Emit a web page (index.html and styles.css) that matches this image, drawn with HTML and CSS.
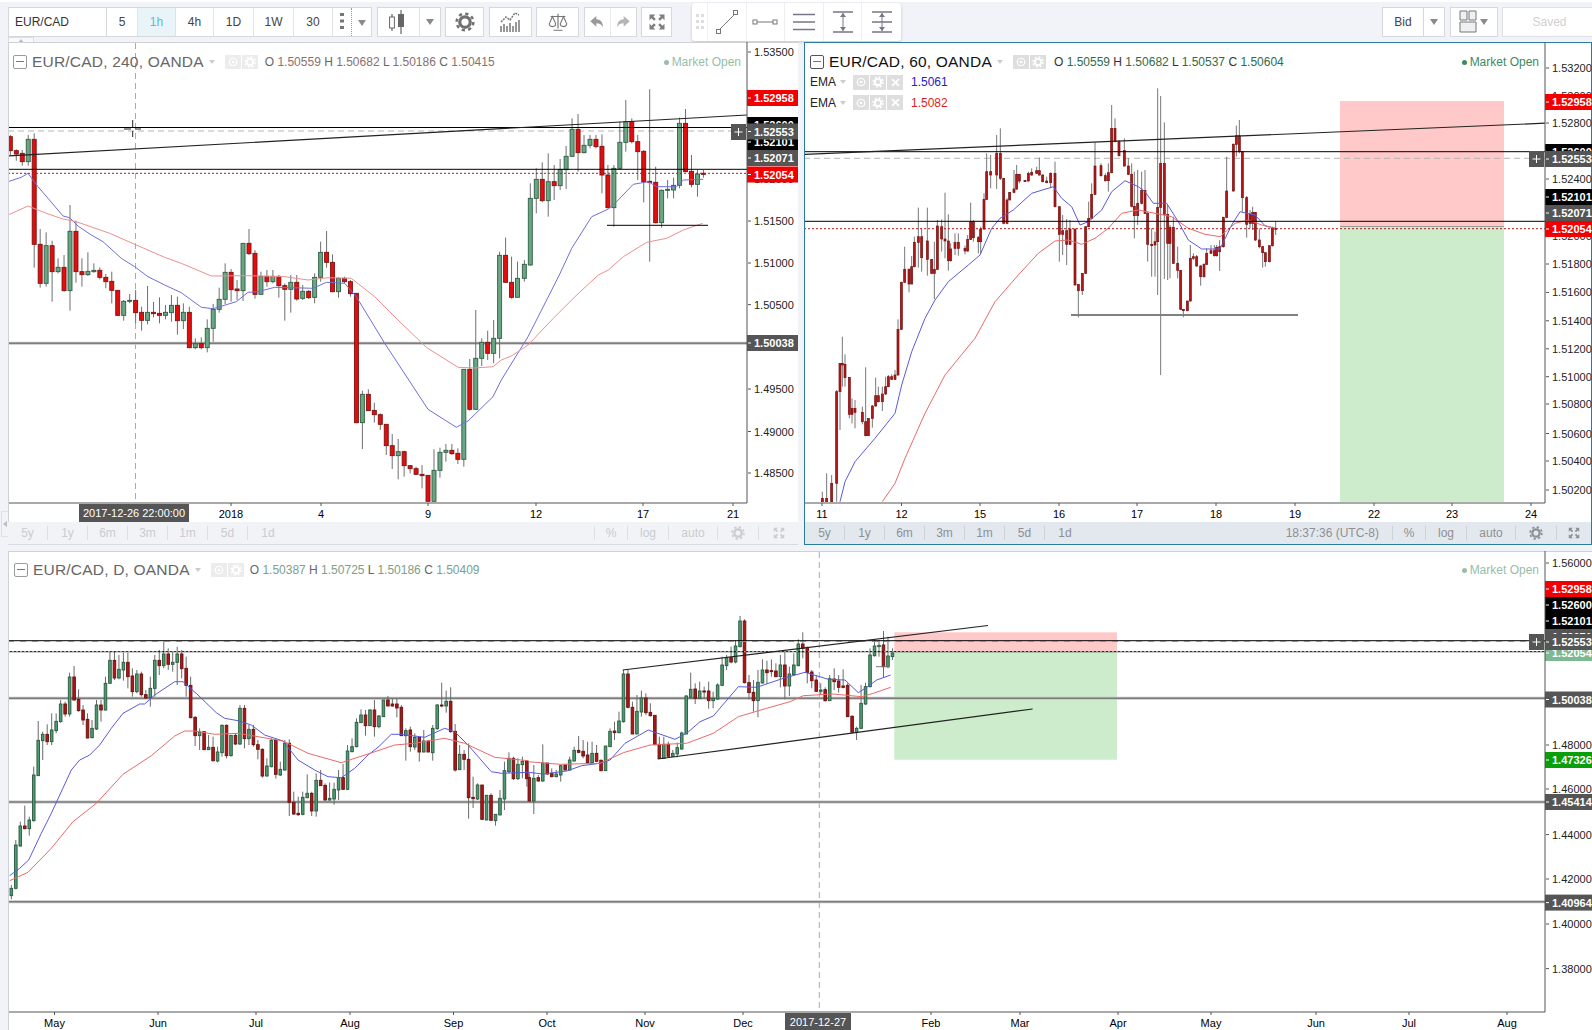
FILE: index.html
```html
<!DOCTYPE html>
<html lang="en">
<head>
    <meta charset="UTF-8">
    <title>EUR/CAD multi chart</title>
    <link rel="stylesheet" href="styles.css">
</head>
<body>
    <!-- Icon sprite -->
    <svg class="sprite" aria-hidden="true">
        <symbol id="i-gear" viewBox="0 0 16 16">
            <circle cx="8" cy="8" r="4.2" fill="none" stroke="currentColor" stroke-width="2.6"/>
            <circle cx="8" cy="8" r="6.7" fill="none" stroke="currentColor" stroke-width="2" stroke-dasharray="2.6 2.66"/>
        </symbol>
        <symbol id="i-eye" viewBox="0 0 16 16">
            <circle cx="8" cy="8" r="5" fill="none" stroke="currentColor" stroke-width="1.6"/>
            <circle cx="8" cy="8" r="1.8" fill="currentColor"/>
        </symbol>
        <symbol id="i-close" viewBox="0 0 16 16">
            <path d="M3 3l10 10M13 3L3 13" stroke="currentColor" stroke-width="2.4"/>
        </symbol>
        <symbol id="i-full" viewBox="0 0 24 24">
            <g fill="currentColor">
                <path d="M3 3h7l-2.400 2.400 3 3-2.200 2.200-3-3L3 10z"/>
                <path d="M21 3v7l-2.400-2.400-3 3-2.200-2.200 3-3L14 3z"/>
                <path d="M21 21h-7l2.400-2.400-3-3 2.200-2.200 3 3L21 14z"/>
                <path d="M3 21v-7l2.400 2.400 3-3 2.200 2.200-3 3L10 21z"/>
            </g>
        </symbol>
    </svg>

    <div class="toolbar">
        <div class="tool-group">
            <div class="symbol-box">EUR/CAD</div>
            <button class="tf tf-sm">5</button>
            <button class="tf tf-active">1h</button>
            <button class="tf">4h</button>
            <button class="tf tf-lg">1D</button>
            <button class="tf tf-lg">1W</button>
            <button class="tf tf-md">30</button>
            <button class="tf tf-dots">
                <svg width="4" height="16" viewBox="0 0 4 16"><path d="M0 0h4v3H0zM0 6.500h4v3H0zM0 13h4v3H0z" fill="#777"/></svg>
            </button>
            <button class="tf tf-caret"><span class="caret"></span></button>
        </div>
        <div class="tool-group">
            <button class="tool tool-candle">
                <svg width="24" height="26" viewBox="0 0 24 26"><path d="M6 5v17M15 1v24" stroke="#666" stroke-width="1.200"/><rect x="3.600" y="8" width="4.800" height="11" fill="#fff" stroke="#666"/><rect x="12" y="5" width="6" height="13" fill="#666"/></svg>
            </button>
            <button class="tool tool-drop"><span class="caret"></span></button>
        </div>
        <div class="tool-group">
            <button class="tool tool-gear"><svg class="ic-gear" width="20" height="20"><use href="#i-gear"/></svg></button>
        </div>
        <div class="tool-group">
            <button class="tool">
                <svg width="24" height="24" viewBox="0 0 24 24"><path d="M3 22v-6M6 22v-8M9 22v-6M12 22v-9M15 22v-6M18 22v-10M21 22v-12" stroke="#777" stroke-width="1.500"/><path d="M3 12l5-5 4 3 5-7 4 2" fill="none" stroke="#777" stroke-width="1.500" stroke-dasharray="2 1"/></svg>
            </button>
        </div>
        <div class="tool-group">
            <button class="tool">
                <svg width="22" height="22" viewBox="0 0 24 24"><path d="M12 3v16M7 21h10M4 6h16" stroke="#777" stroke-width="1.300"/><path d="M6 6l-3.500 8a3.500 3 0 0 0 7 0zM18 6l-3.500 8a3.500 3 0 0 0 7 0z" fill="none" stroke="#777" stroke-width="1.200"/></svg>
            </button>
        </div>
        <div class="tool-group">
            <button class="tool tool-undo">
                <svg width="16" height="16" viewBox="0 0 24 24"><path d="M11 3L2 11l9 8v-5c5 0 8 2 10 6 0-8-4-12-10-12z" fill="#999"/></svg>
            </button>
            <button class="tool tool-redo">
                <svg width="16" height="16" viewBox="0 0 24 24"><path d="M13 3l9 8-9 8v-5c-5 0-8 2-10 6 0-8 4-12 10-12z" fill="#b5b5b5"/></svg>
            </button>
        </div>
        <div class="tool-group">
            <button class="tool tool-full"><svg class="ic-full" width="20" height="20"><use href="#i-full"/></svg></button>
        </div>

        <!-- Floating drawing tools -->
        <div class="draw-bar">
            <div class="draw-grip">
                <svg width="8" height="16" viewBox="0 0 8 16"><path d="M0 0h3v3H0zM5 0h3v3H5zM0 6h3v3H0zM5 6h3v3H5zM0 12h3v3H0zM5 12h3v3H5z" fill="#ddd"/></svg>
            </div>
            <div class="draw-cell">
                <svg width="24" height="26" viewBox="0 0 24 26"><path d="M4 21L20 5" stroke="#777"/><rect x="1.500" y="20.500" width="4" height="4" fill="#fff" stroke="#777"/><rect x="18.500" y="1.500" width="4" height="4" fill="#fff" stroke="#777"/></svg>
            </div>
            <div class="draw-cell">
                <svg width="26" height="10" viewBox="0 0 26 10"><path d="M5 5h16" stroke="#777"/><rect x="1" y="3" width="4" height="4" fill="#fff" stroke="#777"/><rect x="21" y="3" width="4" height="4" fill="#fff" stroke="#777"/></svg>
            </div>
            <div class="draw-cell">
                <svg width="24" height="20" viewBox="0 0 24 20"><path d="M1 2.500h22M1 10h22M1 17.500h22" stroke="#778" stroke-width="1.300"/></svg>
            </div>
            <div class="draw-cell">
                <svg width="24" height="26" viewBox="0 0 24 26"><path d="M2 3h20M2 23h20" stroke="#778" stroke-width="1.300"/><path d="M12 4v18" stroke="#778"/><path d="M12 4l-3 4h6zM12 22l-3-4h6z" fill="#778"/></svg>
            </div>
            <div class="draw-cell">
                <svg width="24" height="26" viewBox="0 0 24 26"><path d="M2 3h20M2 23h20M2 13h20" stroke="#778" stroke-width="1.300"/><path d="M12 4v18" stroke="#778"/><path d="M12 4l-3 4h6zM12 22l-3-4h6z" fill="#778"/></svg>
            </div>
        </div>

        <div class="tool-right">
            <div class="tool-group">
                <button class="tool tool-bid">Bid</button>
                <button class="tool tool-bid-drop"><span class="caret"></span></button>
            </div>
            <div class="tool-group">
                <button class="tool tool-layout">
                    <svg width="18" height="24" viewBox="0 0 18 24"><path d="M1 1h7v9H1zM10 1h7v9h-7zM1 12h16v10H1z" fill="#eef0f4" stroke="#777"/></svg>
                    <span class="caret"></span>
                </button>
            </div>
            <button class="tool tool-saved">Saved</button>
        </div>
    </div>

    <div class="symbol-tab"><span class="caret caret-up"></span></div>
    <div class="side-handle"><span class="caret caret-left"></span></div>

    <div class="panes">
        <!-- Chart 1: 240 -->
        <section class="pane pane-idle">
            <svg class="plot" id="plot1"></svg>
            <div class="pane-head head-wide">
                <span class="minbox"></span>
                <span class="title">EUR/CAD, 240, OANDA</span>
                <span class="caret caret-small"></span>
                <span class="head-btns">
                    <span class="head-btn"><svg width="12" height="12"><use href="#i-eye"/></svg></span>
                    <span class="head-btn"><svg width="12" height="12"><use href="#i-gear"/></svg></span>
                </span>
                <span class="ohlc">O <b>1.50559</b> H <b>1.50682</b> L <b>1.50186</b> C <b>1.50415</b></span>
                <span class="market"><i></i>Market Open</span>
            </div>
            <div class="range-bar">
                <button class="range-btn">5y</button>
                <button class="range-btn">1y</button>
                <button class="range-btn">6m</button>
                <button class="range-btn">3m</button>
                <button class="range-btn">1m</button>
                <button class="range-btn">5d</button>
                <button class="range-btn range-last">1d</button>
                <div class="range-right">
                    <button class="range-opt opt-pct">%</button>
                    <button class="range-opt opt-log">log</button>
                    <button class="range-opt opt-auto">auto</button>
                    <button class="range-opt opt-gear"><svg width="14" height="14"><use href="#i-gear"/></svg></button>
                    <button class="range-opt opt-full"><svg width="14" height="14"><use href="#i-full"/></svg></button>
                </div>
            </div>
        </section>

        <!-- Chart 2: 60 (focused) -->
        <section class="pane pane-active">
            <svg class="plot" id="plot2"></svg>
            <div class="pane-head">
                <span class="minbox"></span>
                <span class="title">EUR/CAD, 60, OANDA</span>
                <span class="caret caret-small"></span>
                <span class="head-btns">
                    <span class="head-btn"><svg width="12" height="12"><use href="#i-eye"/></svg></span>
                    <span class="head-btn"><svg width="12" height="12"><use href="#i-gear"/></svg></span>
                </span>
                <span class="ohlc">O <b>1.50559</b> H <b>1.50682</b> L <b>1.50537</b> C <b>1.50604</b></span>
                <span class="market"><i></i>Market Open</span>
            </div>
            <div class="study-rows">
                <div class="study">
                    <span class="study-name">EMA</span><span class="caret caret-small"></span>
                    <span class="head-btns">
                        <span class="head-btn"><svg width="12" height="12"><use href="#i-eye"/></svg></span>
                        <span class="head-btn"><svg width="12" height="12"><use href="#i-gear"/></svg></span>
                        <span class="head-btn"><svg width="11" height="11"><use href="#i-close"/></svg></span>
                    </span>
                    <span class="study-val val-blue">1.5061</span>
                </div>
                <div class="study">
                    <span class="study-name">EMA</span><span class="caret caret-small"></span>
                    <span class="head-btns">
                        <span class="head-btn"><svg width="12" height="12"><use href="#i-eye"/></svg></span>
                        <span class="head-btn"><svg width="12" height="12"><use href="#i-gear"/></svg></span>
                        <span class="head-btn"><svg width="11" height="11"><use href="#i-close"/></svg></span>
                    </span>
                    <span class="study-val val-red">1.5082</span>
                </div>
            </div>
            <div class="range-bar">
                <button class="range-btn">5y</button>
                <button class="range-btn">1y</button>
                <button class="range-btn">6m</button>
                <button class="range-btn">3m</button>
                <button class="range-btn">1m</button>
                <button class="range-btn">5d</button>
                <button class="range-btn range-last">1d</button>
                <div class="range-right">
                    <span class="range-time">18:37:36 (UTC-8)</span>
                    <button class="range-opt opt-pct">%</button>
                    <button class="range-opt opt-log">log</button>
                    <button class="range-opt opt-auto">auto</button>
                    <button class="range-opt opt-gear"><svg width="14" height="14"><use href="#i-gear"/></svg></button>
                    <button class="range-opt opt-full"><svg width="14" height="14"><use href="#i-full"/></svg></button>
                </div>
            </div>
        </section>

        <!-- Chart 3: D -->
        <section class="pane pane-idle pane-wide">
            <svg class="plot" id="plot3"></svg>
            <div class="pane-head">
                <span class="minbox"></span>
                <span class="title">EUR/CAD, D, OANDA</span>
                <span class="caret caret-small"></span>
                <span class="head-btns">
                    <span class="head-btn"><svg width="12" height="12"><use href="#i-eye"/></svg></span>
                    <span class="head-btn"><svg width="12" height="12"><use href="#i-gear"/></svg></span>
                </span>
                <span class="ohlc">O <b>1.50387</b> H <b>1.50725</b> L <b>1.50186</b> C <b>1.50409</b></span>
                <span class="market"><i></i>Market Open</span>
            </div>
        </section>
    </div>

    <script src="chart.js"></script>
</body>
</html>
```

FILE: styles.css
```css
* { box-sizing: border-box; }

html, body {
    margin: 0;
    height: 100%;
}

body {
    width: 1592px;
    height: 1030px;
    overflow: hidden;
    position: relative;
    font-family: "Liberation Sans", Arial, sans-serif;
    font-size: 12px;
    color: #333;
    background-color: #f1f3f8;
    border-top: 2px solid #fff;
}

button {
    font: inherit;
    color: inherit;
    background: #fff;
    border: 0;
    padding: 0;
}

.sprite { display: none; }

/* Carets */
.caret {
    display: inline-block;
    width: 0;
    height: 0;
    border-left: 4px solid transparent;
    border-right: 4px solid transparent;
    border-top: 6px solid #8a8a8a;
}
.caret-small {
    border-left-width: 3px;
    border-right-width: 3px;
    border-top: 4px solid #ccc;
}
.caret-up {
    border-top: 0;
    border-bottom: 4px solid #bbb;
    border-left-width: 3px;
    border-right-width: 3px;
}
.caret-left {
    border: 0;
    border-top: 3px solid transparent;
    border-bottom: 3px solid transparent;
    border-right: 4px solid #bbb;
}

/* Top toolbar */
.toolbar {
    display: flex;
    align-items: flex-start;
    height: 40px;
    padding: 5px 0 0 8px;
    position: relative;
}
.tool-group {
    display: flex;
    height: 30px;
    margin-right: 4.500px;
    background: #fff;
    border: 1px solid #d6d8dc;
    flex: none;
}
.symbol-box {
    width: 98px;
    line-height: 28px;
    padding-left: 6px;
    color: #333;
    border-right: 1px solid #d6d8dc;
}
.tf {
    width: 38px;
    border-right: 1px solid #e2e3e6;
    color: #444;
}
.tf-sm { width: 31px; }
.tf-lg { width: 40px; }
.tf-md { width: 39px; }
.tf-active {
    background-color: #e9f4f9;
    color: #5cb8dc;
}
.tf-dots {
    width: 19px;
    border-right: 1px dotted #999;
}
.tf-caret {
    width: 19px;
    border: 0;
}
.tool {
    width: 41px;
    display: flex;
    align-items: center;
    justify-content: center;
}
.tool-candle {
    width: 42px;
    border-right: 1px solid #e2e3e6;
}
.tool-drop { width: 20px; }
.tool-gear { width: 37px; }
.ic-gear { color: #707070; }
.ic-full { color: #808080; }
.tool-undo {
    width: 26px;
    border-right: 1px solid #e8e9ec;
}
.tool-redo { width: 25px; }
.tool-full { width: 29px; }

.draw-bar {
    display: flex;
    height: 38px;
    margin: -4px 0 0 15.500px;
    background: #fff;
    border-radius: 3px;
    box-shadow: 0 1px 3px rgba(0, 0, 0, 0.2);
    flex: none;
}
.draw-grip {
    width: 16px;
    display: flex;
    align-items: center;
    justify-content: center;
    border-right: 1px solid #eee;
}
.draw-cell {
    width: 38.600px;
    display: flex;
    align-items: center;
    justify-content: center;
    border-right: 1px solid #eee;
}
.draw-cell:last-child { border-right: 0; }

.tool-right {
    display: flex;
    margin-left: auto;
}
.tool-bid {
    width: 41px;
    color: #444;
    border-right: 1px solid #d6d8dc;
}
.tool-bid-drop { width: 20px; }
.tool-layout {
    width: 46px;
    gap: 3px;
}
.tool-saved {
    width: 90px;
    height: 30px;
    color: #d0d0d0;
    border: 1px solid #dfe1e5;
    border-right: 0;
    padding-left: 4px;
}

/* Small tabs around the charts */
.symbol-tab {
    position: absolute;
    left: 8px;
    top: 35px;
    width: 26px;
    height: 6px;
    background: #f8f9fb;
    border: 1px solid #ddd;
    border-bottom: 0;
    display: flex;
    align-items: center;
    justify-content: center;
}
.side-handle {
    position: absolute;
    left: 1px;
    top: 509px;
    width: 7px;
    height: 26px;
    border: 1px solid #e0e0e0;
    border-right: 0;
    display: flex;
    align-items: center;
    justify-content: center;
}

/* Chart panes */
.panes {
    display: grid;
    grid-template-columns: 790px 788px;
    grid-template-rows: 503px 479px;
    gap: 6px;
    padding-left: 8px;
}
.pane {
    position: relative;
    background: #fff;
    overflow: hidden;
}
.pane-idle { box-shadow: inset 1px 1px 0 #cfd1d4; }
.pane-active { box-shadow: inset 0 0 0 1px #2a7c9c; }
.pane-wide { grid-column: 1 / 3; }
.plot {
    display: block;
    position: absolute;
    left: 0;
    top: 0;
}

/* Legend over the chart */
.pane-head {
    position: absolute;
    left: 0;
    right: 47px;
    top: 11px;
    padding: 0 6px 0 6px;
    height: 18px;
    display: flex;
    align-items: center;
}
.head-wide { right: 51px; padding-left: 5px; }
.pane-wide .pane-head { top: 10px; }
.minbox {
    width: 14px;
    height: 14px;
    margin-right: 5px;
    border: 1px solid #9a9a9a;
    border-radius: 2px;
    position: relative;
    flex: none;
}
.pane-active .minbox { border-color: #555; }
.minbox::after {
    content: "";
    position: absolute;
    left: 2px;
    right: 2px;
    top: 5px;
    height: 1px;
    background: #777;
}
.title {
    font-size: 15.500px;
    letter-spacing: 0.200px;
    color: #666;
    white-space: nowrap;
}
.pane-active .title { color: #111; }
.pane-head > .caret-small { margin: 0 10px 0 5px; }
.head-btns {
    display: flex;
    gap: 1px;
}
.head-btn {
    width: 16px;
    height: 14px;
    display: flex;
    align-items: center;
    justify-content: center;
    background: #ececec;
    color: #fff;
}
.pane-active .head-btn { background: #dedede; }
.ohlc {
    margin-left: 8px;
    color: #666;
    white-space: nowrap;
}
.ohlc b { font-weight: normal; }
.head-wide .ohlc { margin-left: 7px; }
.head-wide .ohlc b { color: #8c6f6f; }
.pane-wide .ohlc { margin-left: 6px; }
.pane-wide .ohlc b { color: #7da08c; }
.pane-active .ohlc { color: #333; }
.pane-active .ohlc b { color: #2f6b4a; }
.market {
    margin-left: auto;
    color: #96bea8;
    white-space: nowrap;
}
.market i {
    display: inline-block;
    width: 5px;
    height: 5px;
    margin: 0 3px 1px 0;
    border-radius: 50%;
    background: currentColor;
}
.pane-active .market { color: #3c8a5f; }

/* Studies under the legend */
.study-rows {
    position: absolute;
    left: 6px;
    top: 30px;
}
.study {
    display: flex;
    align-items: center;
    height: 20.500px;
}
.study-name { color: #222; margin-right: 4px; }
.study .head-btns {
    margin-left: 7px;
}
.study .head-btn {
    width: 16px;
    height: 15px;
}
.study-val { margin-left: 8px; }
.val-blue { color: #2424c4; }
.val-red { color: #d81f1f; }

/* Range bar under the chart */
.range-bar {
    position: absolute;
    left: 0;
    right: 0;
    bottom: 0;
    height: 23px;
    display: flex;
    align-items: center;
    color: #c9ccd1;
    background: #f1f3f7;
    border-bottom: 1px solid #d8dadd;
}
.pane-active .range-bar {
    left: 1px;
    right: 1px;
    bottom: 1px;
    height: 22px;
    color: #8d9095;
    background: #e3e8ee;
    border-bottom: 0;
}
.range-bar button {
    background: none;
    height: 14px;
    line-height: 14px;
    text-align: center;
}
.range-btn {
    width: 40px;
    border-right: 1px solid #dcdfe3;
}
.pane-active .range-btn,
.pane-active .range-opt { border-color: #cdd2d8; }
.range-last { border-right: 0; }
.range-right {
    display: flex;
    align-items: center;
    margin-left: auto;
}
.range-time { margin-right: 13px; }
.range-opt {
    border-left: 1px solid #dcdfe3;
    display: flex;
    align-items: center;
    justify-content: center;
}
.opt-pct { width: 33px; }
.opt-log { width: 41px; }
.opt-auto { width: 49px; }
.opt-gear { width: 41px; }
.opt-full { width: 40px; }
.pane-active .opt-full { width: 35px; }

/* Chart text */
.axis-text {
    font: 11px "Liberation Sans", Arial, sans-serif;
    fill: #222;
}
.tag-text {
    font: bold 11px "Liberation Sans", Arial, sans-serif;
    fill: #fff;
}
.time-text {
    font: 11px "Liberation Sans", Arial, sans-serif;
    fill: #000;
}
.date-text {
    font: 11px "Liberation Sans", Arial, sans-serif;
    fill: #fff;
}
```

FILE: chart.js
```js
// Candles are written as "colour top bottom high low", in thirds of a pixel
// from the origin given to drawCandles.
const NS = "http://www.w3.org/2000/svg";

function add(parent, tag, attrs, text) {
    const node = document.createElementNS(NS, tag);
    for (const key in attrs) {
        node.setAttribute(key, attrs[key]);
    }
    if (text) node.textContent = text;
    parent.appendChild(node);
    return node;
}

function parseCandles(text) {
    return text.trim().split(/[,\n]+/).map(row => row.trim()).filter(row => row).map(row => {
        const parts = row.split(" ");
        return [parts[0]].concat(parts.slice(1).map(Number));
    });
}

function drawCandle(g, style, x, c) {
    const top = c.oy + c.top / 3, bottom = c.oy + c.bot / 3;
    add(g, "line", { x1: x, x2: x, y1: c.oy + c.hi / 3, y2: c.oy + c.lo / 3, stroke: style.wick });
    add(g, "rect", {
        x: x - style.width / 2,
        y: top,
        width: style.width,
        height: Math.max(bottom - top, 1),
        fill: c.col === "g" ? style.up : style.down,
        stroke: c.col === "g" ? style.upEdge : style.downEdge,
        "stroke-width": style.edge
    });
}

// Evenly spaced candles
function drawCandles(g, style, text, x0, dx, oy) {
    parseCandles(text).forEach((p, i) => {
        drawCandle(g, style, x0 + i * dx, { col: p[0], top: p[1], bot: p[2], hi: p[3], lo: p[4], oy: oy });
    });
}

function polyline(g, points, ox, oy, stroke, width) {
    const pts = points.map(p => (ox + p[0] / 3).toFixed(1) + "," + (oy + p[1] / 3).toFixed(1));
    add(g, "polyline", { points: pts.join(" "), fill: "none", stroke: stroke, "stroke-width": width, "stroke-linejoin": "round" });
}

function line(g, x1, y1, x2, y2, stroke, width, dash) {
    const attrs = { x1: x1, y1: y1, x2: x2, y2: y2, stroke: stroke, "stroke-width": width || 1 };
    if (dash) attrs["stroke-dasharray"] = dash;
    add(g, "line", attrs);
}

function thickLine(g, x1, x2, y) {
    line(g, x1, y, x2, y, "#c4c4c4", 3);
    line(g, x1, y, x2, y, "#7c7c7c", 1.5);
}

function setupPlot(id, left, top, width, height, axisX, axisY) {
    const svg = document.getElementById(id);
    svg.setAttribute("width", width);
    svg.setAttribute("height", height);
    svg.setAttribute("viewBox", left + " " + top + " " + width + " " + height);
    const clip = add(add(svg, "defs", {}), "clipPath", { id: id + "-clip" });
    add(clip, "rect", { x: left + 1, y: top + 1, width: axisX - left - 1, height: axisY - top - 1 });
    const plot = add(svg, "g", { "clip-path": "url(#" + id + "-clip)" });
    const right = left + width;
    return { svg, plot, left, top, right, axisX, axisY };
}

function drawAxes(p, ticks, tags, times, axisColor) {
    const svg = p.svg;
    ticks.forEach(t => {
        line(svg, p.axisX + 1, t[0], p.axisX + 4, t[0], "#555");
        add(svg, "text", { x: p.axisX + 7, y: t[0] + 4, class: "axis-text" }, t[1]);
    });
    tags.forEach(t => {
        add(svg, "rect", { x: p.axisX, y: t[0] - 8, width: p.right - p.axisX, height: 16, fill: t[2] });
        line(svg, p.axisX + 1, t[0], p.axisX + 4, t[0], "#fff");
        add(svg, "text", { x: p.axisX + 7, y: t[0] + 4, class: "tag-text" }, t[1]);
    });
    times.forEach(t => {
        line(svg, t[0], p.axisY, t[0], p.axisY + 3, "#555");
        add(svg, "text", { x: t[0], y: p.axisY + 15, class: "time-text", "text-anchor": "middle" }, t[1]);
    });
    line(svg, p.axisX, p.top, p.axisX, p.axisY, axisColor);
    line(svg, p.left + 1, p.axisY, p.axisX, p.axisY, axisColor);
}

function plusBox(svg, x, y) {
    add(svg, "rect", { x: x, y: y, width: 15, height: 16, fill: "#555" });
    line(svg, x + 3.5, y + 8, x + 11.5, y + 8, "#fff");
    line(svg, x + 7.5, y + 4, x + 7.5, y + 12, "#fff");
}

function dateTag(p, x, width, text) {
    add(p.svg, "rect", { x: x, y: p.axisY + 1, width: width, height: 18, fill: "#555" });
    add(p.svg, "text", { x: x + width / 2, y: p.axisY + 14, class: "date-text", "text-anchor": "middle" }, text);
}

/* ---------- Chart 1: EUR/CAD, 240 ---------- */
(function () {
    const p = setupPlot("plot1", 8, 42, 790, 503, 747, 503);
    const g = p.plot;
    const style = { width: 4, edge: 0.9, wick: "#6f6f6f", up: "#6aa584", upEdge: "#2f5f45", down: "#e20d0d", downEdge: "#7d1212" };

    line(g, 135.5, 43, 135.5, 503, "#aaa", 1, "6 4");
    line(g, 8, 131, 747, 131, "#b5b5b5", 1, "6 4");
    thickLine(g, 8, 747, 343.3);

    drawCandles(g, style, `
        r 50 92 45 105, r 92 102 88 122, r 100 125 90 137, g 58 125 45 137, r 58 373 40 443, r 373 490 327 503
        g 377 490 337 500, r 377 455 362 545, g 442 455 415 460, r 442 512 405 515, g 334 512 255 572, r 334 455 302 488
        r 455 464 415 500, g 454 464 397 468, g 451 455 430 458, r 451 472 442 478, r 472 485 462 505, r 484 511 455 550
        r 511 586 511 588, g 544 586 540 602, g 541 544 522 550, r 541 578 510 610, r 577 601 560 632, g 577 601 498 613
        r 577 581 546 592, r 580 586 532 610, g 577 586 555 598, g 556 578 525 605, r 556 602 530 644, g 577 602 550 627
        r 577 683 560 685, g 671 683 655 688, r 671 683 652 688, g 625 683 598 697, g 568 625 552 665, g 538 568 503 578
        g 457 538 430 552, r 457 509 447 545, r 507 512 480 540, g 370 512 370 543, r 370 401 327 405, r 400 523 390 536
        g 469 523 455 525, r 469 485 450 500, g 469 485 450 490, r 469 497 465 533, r 497 508 490 602, g 487 508 465 578
        r 487 537 465 542, g 514 535 495 540, r 514 533 510 537, g 472 532 460 550, g 397 472 365 485, r 397 427 333 443
        r 427 515 403 517, g 475 515 472 533, r 475 485 470 490, r 485 521 480 530, r 520 908 520 910, g 823 908 812 987
        r 823 872 808 873, r 871 884 848 908, r 884 913 880 930, r 913 977 913 1005, r 977 1007 942 1047, g 995 1007 957 1078
        r 995 1037 992 1070, r 1037 1046 1035 1060, r 1046 1063 1040 1065, r 1063 1067 1035 1105, r 1066 1144 1066 1144
        g 1051 1144 988 1144, g 997 1051 983 1073, g 991 997 972 1025, r 991 1001 972 1005, r 1000 1018 985 1032
        g 748 1018 748 1040, r 748 868 717 872, g 715 868 570 870, g 667 715 655 738, r 667 700 632 720, g 655 700 600 730
        g 406 655 395 715, r 406 487 353 488, r 487 532 410 536, g 475 532 425 532
    `, 10.33, 5.967, 120);
    drawCandles(g, style, `
        g 538 580 525 590, g 340 540 295 542, g 283 340 250 385, r 283 347 232 352, g 290 347 205 395, r 290 302 240 345
        g 254 302 222 315, g 214 254 183 312, g 133 214 100 215, r 133 203 87 260, g 181 203 150 205, g 163 181 150 190
        r 163 185 150 190, r 184 270 148 325, r 270 368 240 370, g 250 368 240 425, g 172 250 110 255, g 110 172 45 200
        r 110 170 100 175, r 170 200 150 285, r 199 290 195 352, r 289 292 13 530, r 292 413 245 415, g 316 413 313 428
        g 313 316 285 340, g 301 315 278 340, g 115 301 98 310, r 115 260 72 262, r 259 298 210 307, g 267 298 255 335
        r 265 268 255 278
    `, 524.33, 5.97, 85);

    polyline(g, [[0,185],[40,172],[60,160],[90,200],[120,235],[165,288],[185,293],[210,318],[250,345],[285,365],[340,415],[380,440],[420,470],[470,495],[520,518],[580,562],[615,566],[685,545],[720,517],[750,515],[800,502],[850,503],[915,505],[955,487],[1010,490],[1045,530],[1130,670],[1260,868],[1345,922],[1380,903],[1455,830],[1480,780],[1560,650],[1654,465],[1691,385],[1751,290],[1801,267],[1821,250],[1876,193],[1921,185],[1946,200],[2006,200],[2026,180],[2086,178]], 8, 120, "#6f6fdc", 1);
    polyline(g, [[0,285],[60,258],[115,280],[165,297],[205,305],[305,340],[380,373],[470,412],[520,430],[610,468],[720,467],[830,470],[900,480],[960,473],[1030,475],[1100,530],[1170,600],[1255,682],[1350,742],[1400,744],[1455,740],[1480,720],[1510,708],[1560,675],[1636,595],[1706,525],[1771,465],[1801,450],[1846,410],[1916,367],[1976,355],[2026,330],[2084,310]], 8, 120, "#ee8f8f", 1);

    line(g, 8, 127.5, 747, 127.5, "#000");
    line(g, 8, 169.3, 747, 169.3, "#000");
    line(g, 8, 173.3, 747, 173.3, "#b01818", 1, "2 2");
    line(g, 8, 156, 747, 115, "#222", 1.2);
    line(g, 607, 225.3, 708, 225.3, "#000");

    // Mouse cross
    line(g, 124, 129, 131, 129, "#222");
    line(g, 135, 129, 141, 129, "#222");
    line(g, 132.7, 120, 132.7, 127, "#222");
    line(g, 132.7, 131, 132.7, 137, "#222");

    plusBox(p.svg, 731, 124);
    drawAxes(p,
        [[52,"1.53500"],[179,"1.52000"],[221,"1.51500"],[263,"1.51000"],[304.6,"1.50500"],[389,"1.49500"],[431.5,"1.49000"],[473,"1.48500"]],
        [[125,"1.52600","#000"],[142,"1.52101","#000"],[158,"1.52071","#555"],[131.5,"1.52553","#555"],[174.5,"1.52054","#f20000"],[98,"1.52958","#f20000"],[343,"1.50038","#555"]],
        [[231,"2018"],[321,"4"],[428,"9"],[536,"12"],[643,"17"],[733,"21"]],
        "#555");
    dateTag(p, 79, 110, "2017-12-26 22:00:00");
})();

/* ---------- Chart 2: EUR/CAD, 60 ---------- */
(function () {
    const p = setupPlot("plot2", 804, 42, 788, 503, 1545, 503);
    const g = p.plot;
    const style = { width: 2, edge: 0.7, wick: "#777", up: "#4b9a72", upEdge: "#1d5c3c", down: "#b11717", downEdge: "#7a1212" };

    add(g, "rect", { x: 1340, y: 101, width: 164, height: 125, fill: "#ffc9c9" });
    add(g, "rect", { x: 1340, y: 227, width: 164, height: 275, fill: "#cdeccb" });
    line(g, 1340, 226.5, 1504, 226.5, "#999");
    line(g, 804, 158.3, 1545, 158.3, "#b5b5b5", 1, "6 4");

    const rows = `
        52 g 1240 1250 1220 1250, 65 g 1240 1250 1165 1250, 80 g 1195 1250 1170 1250, 95 g 920 1195 915 1250, 105 g 835 920 835 1035
        112 r 835 840 755 905, 120 r 838 878 808 905, 133 r 877 988 877 1000, 141 g 970 988 940 1015, 150 r 970 982 945 1030, 172 r 982 1010 965 1018
        182 r 1010 1052 847 1054, 190 g 1000 1052 1000 1052, 202 g 963 1000 960 1028, 212 g 932 963 878 965, 220 r 932 950 905 952, 232 g 927 950 905 978
        242 g 905 927 875 930, 250 g 875 905 870 907, 260 r 875 883 868 885, 270 g 870 883 855 885, 279 g 733 870 703 872, 289 g 592 733 590 735
        299 g 553 592 485 593, 312 r 553 597 550 622, 320 g 545 597 513 598, 328 g 472 545 455 547, 340 g 455 472 368 548, 350 r 455 518 430 560
        367 r 468 523 368 572, 380 r 523 565 523 568, 388 g 553 565 470 642, 397 g 423 553 405 555, 410 r 425 462 403 500, 420 r 462 468 323 520
        430 r 468 527 388 557, 437 g 492 527 475 530, 450 g 472 490 445 510, 460 r 472 490 445 512, 480 r 490 498 482 508, 488 g 463 498 450 500
        497 g 410 463 353 465, 505 r 410 458 405 470, 520 r 458 470 453 505, 527 g 432 470 425 505, 537 g 343 432 325 435, 545 g 260 343 205 345
        557 r 260 270 210 310, 575 g 205 270 150 312, 586 r 205 280 130 285, 596 r 280 415 280 418, 606 g 345 415 340 418, 614 g 322 345 322 345
        627 g 312 322 255 325, 635 g 268 312 240 315, 643 r 268 288 268 295, 660 r 286 290 285 290, 670 g 265 288 260 290, 680 g 262 270 250 272
        695 g 257 265 245 267, 703 r 257 270 218 272, 713 r 270 290 268 292, 725 r 288 293 275 295, 737 g 265 293 262 310, 750 r 265 365 230 367
        763 r 365 448 365 530, 773 g 437 448 390 510, 785 r 437 478 402 540, 795 g 432 478 405 480, 810 r 432 600 432 602, 820 r 598 617 598 697
        832 g 565 617 565 630, 842 g 425 565 425 567, 851 g 400 425 350 427, 860 g 328 400 295 403, 870 g 243 328 172 330, 888 r 242 272 235 275
        901 r 272 287 265 290, 910 g 263 287 235 320, 920 g 130 263 60 265, 930 r 130 170 100 172, 942 r 170 212 165 215, 958 r 197 243 160 245
        970 r 243 268 220 270, 980 r 268 364 235 367, 988 r 364 392 260 460, 998 g 355 392 255 420, 1010 g 316 355 260 358, 1020 r 316 385 255 387
        1028 r 385 478 380 530, 1040 r 478 482 430 575, 1050 g 470 480 440 575, 1058 g 367 470 10 630, 1067 g 235 367 33 870, 1078 r 235 388 112 582
        1088 r 388 475 360 585, 1095 g 427 475 420 580, 1105 r 427 535 395 537, 1118 r 535 556 485 580, 1127 r 556 673 556 675, 1135 r 673 677 673 697
        1147 g 648 677 648 679, 1156 g 520 648 480 650, 1165 g 515 520 505 525, 1175 r 515 543 510 545, 1187 r 543 575 540 602, 1197 g 538 575 535 578
        1205 g 505 538 490 540, 1218 g 497 505 480 505, 1228 r 497 512 480 515, 1235 g 487 512 480 515, 1244 g 485 500 465 558, 1255 g 397 485 395 488
        1265 g 318 397 215 400, 1285 g 178 318 175 320, 1294 g 152 178 122 215, 1303 r 152 200 105 205, 1312 r 200 338 200 380, 1325 r 338 418 333 458
        1335 g 388 415 375 430, 1343 g 382 415 365 435, 1351 r 382 465 382 468, 1363 r 465 485 430 490, 1373 r 485 503 483 548, 1381 r 503 530 503 545
        1393 g 482 530 482 532, 1402 g 430 482 425 485, 1412 r 430 433 408 450
    `;
    parseCandles(rows).forEach(row => {
        // Here the x comes first, the candles are not evenly spaced on screen
        const parts = [row[0]].concat(row.slice(1));
        const x = 805 + Number(parts[0]) / 3;
        drawCandle(g, style, x, { col: parts[1], top: parts[2], bot: parts[3], hi: parts[4], lo: parts[5], oy: 85 });
    });

    polyline(g, [[105,1250],[120,1190],[150,1130],[210,1060],[270,985],[290,900],[320,800],[360,700],[390,645],[430,590],[490,540],[525,510],[560,430],[585,400],[625,375],[680,325],[745,305],[770,340],[800,365],[825,420],[850,410],[890,375],[920,320],[960,287],[1000,305],[1020,320],[1045,355],[1085,355],[1120,410],[1150,465],[1190,492],[1245,492],[1280,420],[1305,380],[1350,390],[1380,422],[1410,430]], 805, 85, "#5a5ae0", 1);
    polyline(g, [[232,1250],[270,1195],[300,1120],[360,985],[420,870],[510,760],[570,650],[640,570],[700,505],[750,468],[790,465],[830,478],[870,460],[910,430],[950,385],[1000,375],[1050,385],[1100,395],[1150,430],[1200,448],[1245,455],[1290,415],[1330,405],[1370,420],[1410,430]], 805, 85, "#ea6a6a", 1);

    line(g, 804, 151.7, 1545, 151.7, "#000");
    line(g, 804, 221.3, 1545, 221.3, "#000");
    line(g, 804, 228.7, 1545, 228.7, "#b01818", 1, "2 2");
    line(g, 805, 154.3, 1545, 123.2, "#222", 1.2);
    line(g, 1071, 315, 1298, 315, "#808080", 2);

    plusBox(p.svg, 1529, 151);
    drawAxes(p,
        [[68,"1.53200"],[96,"1.53000"],[123,"1.52800"],[179,"1.52400"],[236,"1.52000"],[264,"1.51800"],[292.4,"1.51600"],[320.8,"1.51400"],[348.8,"1.51200"],[376.7,"1.51000"],[404,"1.50800"],[433.5,"1.50600"],[461,"1.50400"],[490,"1.50200"]],
        [[152,"1.52600","#000"],[159,"1.52553","#555"],[197,"1.52101","#000"],[213,"1.52071","#555"],[229,"1.52054","#f20000"],[102,"1.52958","#f20000"]],
        [[822,"11"],[901.5,"12"],[980,"15"],[1059,"16"],[1137,"17"],[1216,"18"],[1295,"19"],[1374,"22"],[1452,"23"],[1531,"24"]],
        "#555");
})();

/* ---------- Chart 3: EUR/CAD, D ---------- */
(function () {
    const p = setupPlot("plot3", 8, 551, 1584, 479, 1545, 1012);
    const g = p.plot;
    const style = { width: 2.6, edge: 0.9, wick: "#6a6a6a", up: "#4f9a72", upEdge: "#275a3f", down: "#aa1717", downEdge: "#6a1010" };

    add(g, "rect", { x: 894.3, y: 632.3, width: 222.7, height: 19.4, fill: "#ffc9c9" });
    add(g, "rect", { x: 894.3, y: 651.7, width: 222.7, height: 108, fill: "#cdeccb" });
    line(g, 819.3, 552, 819.3, 1012, "#aaa", 1, "6 4");
    thickLine(g, 8, 1545, 698.3);
    thickLine(g, 8, 1545, 802);
    thickLine(g, 8, 1545, 901.7);

    drawCandles(g, style, `
        g 775 797 765 808, g 645 775 630 778, g 588 648 575 650, r 588 596 527 598, g 570 596 560 617, g 435 572 410 575
        g 331 437 273 437, g 313 332 305 390, r 313 335 283 345, g 300 335 250 345, g 274 302 250 310, g 222 275 210 278
        r 222 252 215 260, g 141 252 128 260, r 141 210 108 212, r 208 242 178 245, r 240 270 225 285, r 268 324 250 325
        g 295 323 270 325, g 225 297 210 300, r 225 240 210 275, g 160 240 140 242, g 91 160 65 160, r 91 144 65 150
        g 118 144 75 148, g 97 120 68 152, r 97 140 68 175, r 138 185 115 200, g 132 185 120 190, r 132 194 125 200
        r 194 204 180 205, g 175 203 140 230, g 91 175 75 200, r 91 107 60 135, g 72 107 35 115, r 72 103 55 120
        g 97 103 65 125, g 72 97 50 165, r 72 116 60 145, r 115 166 80 200, r 166 263 140 265, r 262 317 258 348
        g 306 317 295 360, r 305 359 305 360, g 352 359 315 360, r 352 392 320 395, g 366 393 350 397, g 286 368 283 380
        r 286 377 283 385, g 316 377 315 380, r 316 342 310 345, g 235 342 225 345, r 235 326 225 355, g 298 326 285 345
        r 298 344 285 350, r 344 358 330 388, r 358 438 355 443, g 408 438 385 440, g 331 410 325 412, r 331 433 325 446
        g 418 435 395 438, g 340 420 330 423, r 340 517 328 558, r 517 552 485 555, r 550 554 500 558, g 502 553 485 556
        g 490 503 433 505, r 490 543 485 558, g 451 543 430 560, r 451 467 420 468, r 466 510 460 512, g 505 510 458 512
        g 478 507 458 524, g 443 480 420 510, r 443 478 402 480, g 363 478 345 480, g 350 365 325 367, g 277 350 265 352
        g 255 278 238 278, r 255 287 240 317, g 240 287 237 288, r 240 290 210 320, g 258 290 255 295, g 210 260 210 260
        r 210 228 198 228, r 222 228 205 230, r 222 234 205 262, r 232 317 225 318, g 302 317 295 392, r 300 350 290 365
        g 322 351 310 360, r 322 366 320 395, g 333 366 300 367, r 333 366 330 367, g 295 368 285 392, g 225 296 222 300
        r 225 228 158 232, g 214 228 182 248, r 214 305 172 308, r 304 420 282 425, g 373 419 345 420, r 373 388 360 420
        r 388 503 340 566, r 502 506 440 534, g 465 507 460 510, r 465 568 465 570, g 496 570 495 570, r 496 571 490 572
        g 553 572 553 587, g 505 555 480 555, g 422 507 395 540, g 385 425 367 430, r 385 446 380 450, g 403 446 385 450
        g 394 404 380 445, r 393 446 390 470
    `, 11.33, 4.483, 630);
    drawCandles(g, style, `
        r 533 603 520 604, g 535 603 495 642, r 533 543 525 545, g 489 543 433 545, r 489 522 490 525, r 520 530 505 532
        g 522 530 510 532, g 497 525 495 545, r 495 510 492 512, g 480 510 470 512, g 451 483 440 485, r 451 457 408 460
        r 454 468 420 475, r 465 488 425 490, g 460 488 425 490, r 460 484 435 485, r 481 512 478 514, g 438 512 438 512
        g 394 440 385 440, r 393 398 365 420, g 363 398 335 400, g 222 365 210 368, r 222 322 210 325, r 322 402 305 402
        g 334 402 285 402, g 294 336 272 350, r 294 338 280 345, r 337 347 310 350, r 346 434 345 435, r 433 475 410 477
        g 433 475 410 477, r 433 469 425 470, g 460 469 450 470, g 443 462 428 472, g 399 447 395 450, g 288 402 285 402
        g 268 292 218 295, r 267 295 250 312, g 273 295 245 295, r 273 275 260 295, r 273 302 245 326, g 295 302 275 325
        g 255 297 250 300, g 195 256 170 258, g 173 197 165 210, r 173 186 140 190, g 138 186 120 190, g 63 140 48 142
        r 63 248 58 250, r 248 278 225 298, r 277 302 240 335, g 247 302 210 352, g 210 249 178 250, r 210 218 182 252
        r 212 214 178 230, r 213 230 190 232, g 195 230 165 262, r 195 258 150 298, g 222 258 200 288, g 195 224 160 226
        g 132 197 118 199, r 132 145 97 175, r 142 217 140 250, r 216 242 210 265, r 240 274 225 275, g 270 274 250 285
        r 269 302 262 305, g 236 302 225 303, r 237 245 205 270, r 243 262 225 278, r 258 262 208 265, r 256 350 250 350
        r 349 397 345 400, g 385 397 380 420, g 310 385 255 388, g 260 312 248 315, g 165 260 145 262, g 138 167 118 170
        g 136 140 120 170, r 135 200 93 232, g 168 200 110 205, g 159 170 145 180
    `, 529.33, 4.483, 600);

    polyline(g, [[5,737],[35,715],[62,690],[100,610],[130,550],[190,420],[215,390],[245,375],[275,345],[310,295],[345,250],[395,222],[410,222],[440,195],[500,155],[525,155],[570,195],[625,248],[650,265],[690,272],[730,285],[770,315],[800,325],[825,333],[870,390],[920,420],[960,440],[1000,443],[1040,415],[1080,375],[1110,352],[1150,313],[1180,313],[1250,322],[1310,295],[1340,305],[1380,345],[1450,425],[1480,430],[1560,427]], 8, 630, "#5a5ae0", 1);
    polyline(g, [[84,517],[130,522],[200,513],[245,497],[300,490],[330,480],[375,430],[445,390],[525,418],[560,400],[600,365],[640,348],[715,260],[770,262],[850,235],[915,217],[985,238],[1035,240],[1075,278],[1100,262],[1130,240],[1172,225]], 500, 600, "#5a5ae0", 1);
    polyline(g, [[5,752],[60,727],[130,655],[195,575],[265,520],[345,433],[430,377],[500,318],[530,303],[560,303],[620,313],[690,310],[750,320],[825,333],[900,370],[1000,398],[1080,372],[1160,345],[1220,340],[1310,325],[1370,340],[1460,382],[1560,392]], 8, 630, "#ea6a6a", 1);
    polyline(g, [[84,485],[180,493],[300,490],[370,458],[450,435],[560,430],[640,400],[715,350],[800,325],[870,305],[910,287],[1000,282],[1085,290],[1120,280],[1172,262]], 500, 600, "#ea6a6a", 1);

    line(g, 8, 641.5, 1545, 641.5, "#aaa", 1, "6 6");
    line(g, 8, 640.7, 1545, 640.7, "#000");
    line(g, 8, 651.7, 1545, 651.7, "#000");
    line(g, 8, 651.7, 1545, 651.7, "#9ac7ac", 1, "2 2");
    line(g, 622.7, 670, 988, 625.5, "#222", 1.2);
    line(g, 657.7, 759, 1032.6, 709, "#222", 1.2);
    line(g, 876, 666.7, 890, 666.7, "#777");

    plusBox(p.svg, 1529, 634);
    drawAxes(p,
        [[563,"1.56000"],[745,"1.48000"],[789,"1.46000"],[834.6,"1.44000"],[879,"1.42000"],[924,"1.40000"],[968.6,"1.38000"]],
        [[605,"1.52600","#000"],[621,"1.52101","#000"],[637,"1.52071","#555"],[653,"1.52054","#7db892"],[642,"1.52553","#555"],[589,"1.52958","#f20000"],[699.5,"1.50038","#555"],[760,"1.47326","#0a9e0a"],[802,"1.45414","#555"],[902.6,"1.40964","#555"]],
        [[54.5,"May"],[158,"Jun"],[256,"Jul"],[350,"Aug"],[453.5,"Sep"],[547,"Oct"],[645,"Nov"],[743,"Dec"],[931,"Feb"],[1020,"Mar"],[1118,"Apr"],[1211,"May"],[1316,"Jun"],[1409,"Jul"],[1507,"Aug"]],
        "#555");
    dateTag(p, 785, 66, "2017-12-27");
})();
```
